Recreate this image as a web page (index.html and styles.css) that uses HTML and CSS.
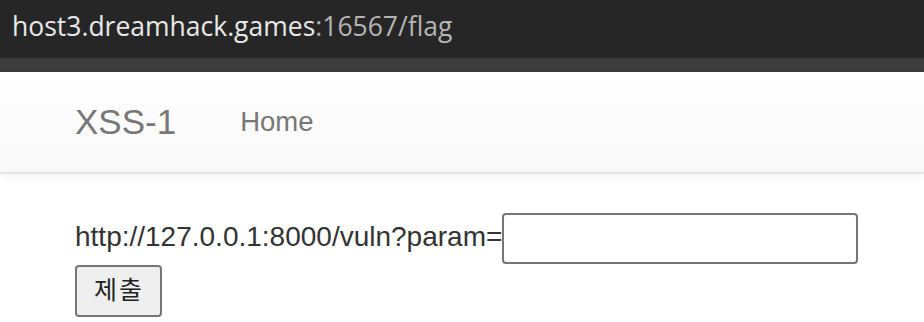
FILE: index.html
```html
<!DOCTYPE html>
<html lang="ko">
<head>
    <meta charset="UTF-8">
    <meta name="viewport" content="width=device-width, initial-scale=1.0">
    <title>XSS-1</title>
    <link rel="stylesheet" href="styles.css">
</head>
<body>
    <div class="address-bar">
        <span class="host">host3.dreamhack.games</span><span class="path">:16567/flag</span>
    </div>
    <div class="tab-strip"></div>
    <nav class="navbar">
        <a class="navbar-brand" href="/">XSS-1</a>
        <ul class="nav">
            <li><a href="/">Home</a></li>
        </ul>
    </nav>
    <div class="container">
        <form method="GET" onsubmit="return false;">
            <div class="form-line">http://127.0.0.1:8000/vuln?param=<input type="text" name="param" class="param-input"></div>
            <input type="submit" class="submit-button" value="제출">
        </form>
    </div>
</body>
</html>
```

FILE: styles.css
```css
:root {
    --text-color: #333333;
    --nav-color: #777777;
    --chrome-dark: #262626;
    --chrome-strip: #3c3c3c;
    --control-border: #767676;
}

body {
    margin: 0;
    padding: 0;
    font-family: 'Liberation Sans', Arial, sans-serif;
    color: var(--text-color);
    background-color: white;
}

.address-bar {
    height: 58px;
    background-color: var(--chrome-dark);
    padding-left: 12px;
    font-family: 'Open Sans', 'Noto Sans', sans-serif;
    font-size: 26.5px;
    line-height: 52px;
    white-space: nowrap;
}

.host {
    color: #e8e8e8;
}

.path {
    color: #b4b4b4;
}

.tab-strip {
    height: 14px;
    background-color: var(--chrome-strip);
}

.navbar {
    display: flex;
    align-items: center;
    height: 100px;
    padding-left: 75px;
    background-image: linear-gradient(to bottom, #ffffff 0%, #f8f8f8 100%);
    border-bottom: 2px solid #e5e5e5;
    box-shadow: 0 2px 8px rgba(0, 0, 0, 0.06);
}

.navbar-brand {
    color: var(--nav-color);
    font-size: 35px;
    text-decoration: none;
    margin-right: 64px;
}

.nav {
    list-style: none;
    margin: 0;
    padding: 0;
    display: flex;
}

.nav a {
    color: var(--nav-color);
    font-size: 27.5px;
    text-decoration: none;
}

.container {
    padding: 39px 0 0 75px;
}

.form-line {
    font-size: 28px;
}

.param-input {
    box-sizing: border-box;
    width: 356px;
    height: 51px;
    margin: 0;
    vertical-align: middle;
    border: 2px solid var(--control-border);
    border-radius: 4px;
    background-color: white;
}

.submit-button {
    display: block;
    box-sizing: border-box;
    width: 87px;
    height: 52px;
    margin: 1px 0 0 0;
    padding: 0 0 6px 1px;
    font-family: 'Noto Sans CJK KR', sans-serif;
    font-size: 25px;
    letter-spacing: 2px;
    color: #222222;
    background-color: #efefef;
    border: 2px solid var(--control-border);
    border-radius: 4px;
}
```
